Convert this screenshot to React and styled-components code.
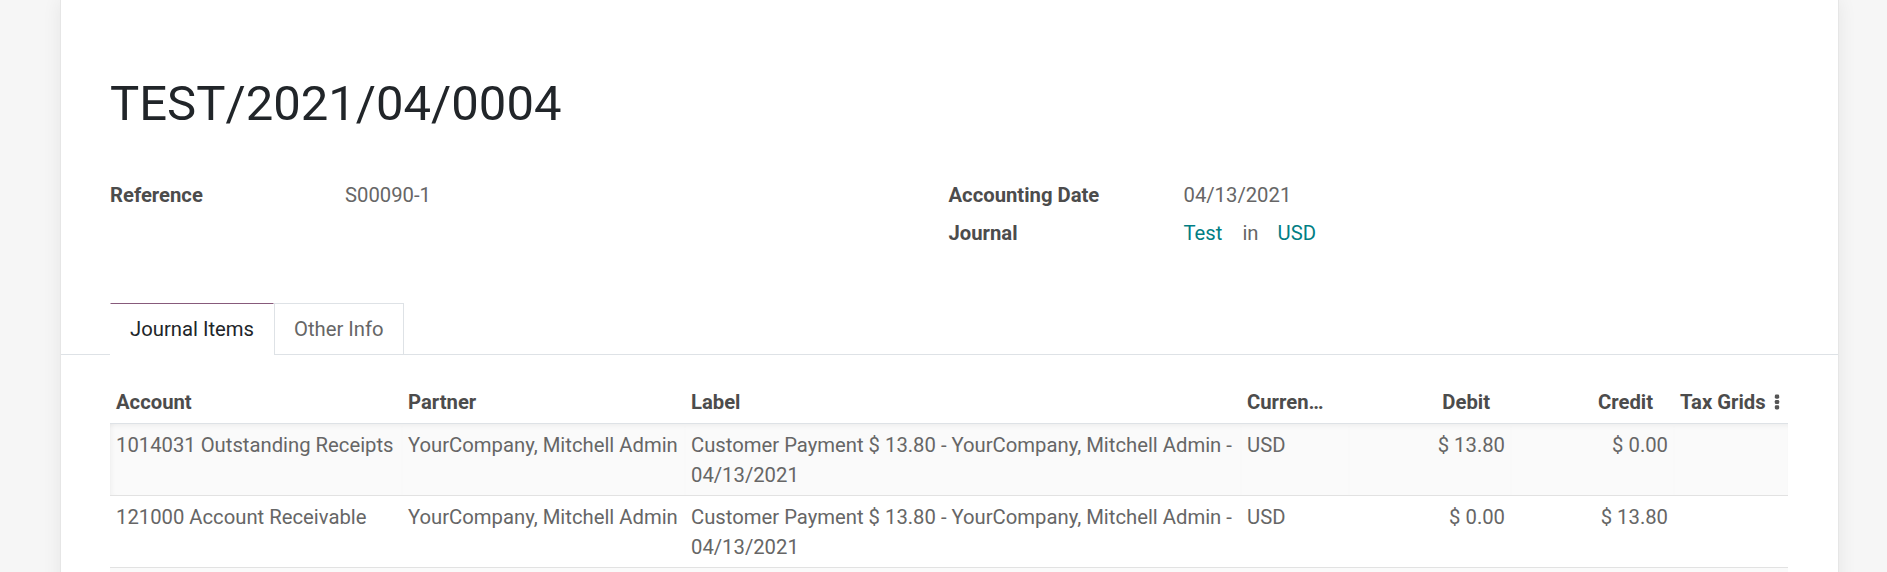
import React from "react";
import styled, { createGlobalStyle } from "styled-components";

const GlobalStyle = createGlobalStyle`
  html, body {
    margin: 0;
    padding: 0;
  }
  body {
    background: #f6f6f6;
    font-family: Roboto, "Noto Sans", sans-serif;
    font-size: 20.25px;
    line-height: 1.5;
    color: #666666;
  }
`;

const columns = [
  { key: "account", title: "Account", width: 292 },
  { key: "partner", title: "Partner", width: 283 },
  { key: "label", title: "Label", width: 556, wrap: true },
  { key: "currency", title: "Currency", width: 108 },
  { key: "debit", title: "Debit", width: 162, numeric: true },
  { key: "credit", title: "Credit", width: 163, numeric: true },
  { key: "tax", title: "Tax Grids", width: 114, toggler: true },
];

const lines = [
  {
    account: "1014031 Outstanding Receipts",
    partner: "YourCompany, Mitchell Admin",
    label: "Customer Payment $ 13.80 - YourCompany, Mitchell Admin - 04/13/2021",
    currency: "USD",
    debit: "$\u00a013.80",
    credit: "$\u00a00.00",
    tax: "",
  },
  {
    account: "121000 Account Receivable",
    partner: "YourCompany, Mitchell Admin",
    label: "Customer Payment $ 13.80 - YourCompany, Mitchell Admin - 04/13/2021",
    currency: "USD",
    debit: "$\u00a00.00",
    credit: "$\u00a013.80",
    tax: "",
  },
];

const DotsIcon = () => (
  <svg width="6" height="16" viewBox="0 0 6 16">
    <rect x="0.8" y="0.5" width="4.4" height="4.2" rx="1.4" fill="#555" />
    <rect x="0.8" y="5.9" width="4.4" height="4.2" rx="1.4" fill="#555" />
    <rect x="0.8" y="11.3" width="4.4" height="4.2" rx="1.4" fill="#555" />
  </svg>
);

const App = () => {
  return (
    <Page>
      <GlobalStyle />
      <Sheet>
        <Title>TEST/2021/04/0004</Title>

        <InfoGrid>
          <InfoGroup>
            <InfoRow>
              <FieldLabel>Reference</FieldLabel>
              <FieldValue>S00090-1</FieldValue>
            </InfoRow>
          </InfoGroup>
          <InfoGroup>
            <InfoRow>
              <FieldLabel>Accounting Date</FieldLabel>
              <FieldValue>04/13/2021</FieldValue>
            </InfoRow>
            <InfoRow>
              <FieldLabel>Journal</FieldLabel>
              <FieldValue>
                <LinkText>Test</LinkText>
                <InWord>in</InWord>
                <LinkText>USD</LinkText>
              </FieldValue>
            </InfoRow>
          </InfoGroup>
        </InfoGrid>

        <Tabs>
          <Tab $active>Journal Items</Tab>
          <Tab>Other Info</Tab>
        </Tabs>

        <Table>
          <colgroup>
            {columns.map((c) => (
              <col key={c.key} style={{ width: c.width }} />
            ))}
          </colgroup>
          <thead>
            <tr>
              {columns.map((c) => (
                <HeadCell key={c.key} $numeric={c.numeric} $toggler={c.toggler}>
                  {c.toggler ? (
                    <HeadInner>
                      <span>{c.title}</span>
                      <DotsIcon />
                    </HeadInner>
                  ) : (
                    c.title
                  )}
                </HeadCell>
              ))}
            </tr>
          </thead>
          <tbody>
            {lines.map((line, i) => (
              <Row key={i} $striped={i % 2 === 0} $first={i === 0}>
                {columns.map((c) => (
                  <Cell key={c.key} $numeric={c.numeric} $wrap={c.wrap}>
                    {line[c.key]}
                  </Cell>
                ))}
              </Row>
            ))}
            <Row $striped>
              {columns.map((c) => (
                <Cell key={c.key}>&nbsp;</Cell>
              ))}
            </Row>
          </tbody>
        </Table>
      </Sheet>
    </Page>
  );
};

export default App;

const Page = styled.div`
  min-height: 100vh;
  padding: 0 48px 0 60px;
  box-sizing: border-box;
`;

const Sheet = styled.div`
  min-height: 100vh;
  box-sizing: border-box;
  background: #ffffff;
  border-left: 1px solid #e6e6e6;
  border-right: 1px solid #e6e6e6;
  box-shadow: 0 0 18px rgba(0, 0, 0, 0.07);
  padding: 75px 51px 0 49px;
  overflow: hidden;
`;

const Title = styled.h1`
  margin: 0;
  font-size: 49px;
  font-weight: 400;
  line-height: 1.2;
  color: #212529;
`;

const InfoGrid = styled.div`
  display: grid;
  grid-template-columns: 1fr 1fr;
  margin-top: 42px;
`;

const InfoGroup = styled.div`
  display: flex;
  flex-direction: column;
`;

const InfoRow = styled.div`
  display: grid;
  grid-template-columns: 235px 1fr;
  line-height: 38px;
`;

const FieldLabel = styled.div`
  font-weight: 700;
  color: #4c4c4c;
`;

const FieldValue = styled.div`
  color: #666666;
`;

const LinkText = styled.span`
  color: #017e84;
`;

const InWord = styled.span`
  margin: 0 19px 0 20px;
  color: #666666;
`;

const Tabs = styled.div`
  display: flex;
  margin: 51px -51px 0 -50px;
  padding-left: 50px;
  border-bottom: 1px solid #dee2e6;
`;

const Tab = styled.div`
  margin-bottom: -1px;
  padding: 10px 19px;
  line-height: 30px;
  border: 1px solid;
  border-color: ${(p) =>
    p.$active ? "#875a7b #ffffff #ffffff #ffffff" : "#dee2e6"};
  background: #ffffff;
  color: ${(p) => (p.$active ? "#212529" : "#666666")};
`;

const Table = styled.table`
  width: 100%;
  margin-top: 25px;
  table-layout: fixed;
  border-collapse: collapse;
`;

const HeadCell = styled.th`
  padding: 7px ${(p) => (p.$toggler ? "8px" : "21px")} 6px 6px;
  text-align: ${(p) => (p.$numeric ? "right" : "left")};
  font-weight: 700;
  line-height: 30px;
  color: #4c4c4c;
  white-space: nowrap;
  overflow: hidden;
  text-overflow: ellipsis;
  border-bottom: 1px solid #dee2e6;
`;

const HeadInner = styled.div`
  display: flex;
  align-items: center;
  justify-content: space-between;
`;

const Row = styled.tr`
  background: ${(p) => (p.$striped ? "#fafafa" : "#ffffff")};
  td {
    box-shadow: ${(p) =>
      p.$first ? "inset 0 5px 5px -3px rgba(0, 0, 0, 0.05)" : "none"};
  }
  td:first-child {
    box-shadow: ${(p) =>
      p.$first
        ? "inset 0 5px 5px -3px rgba(0, 0, 0, 0.05), inset 5px 0 5px -3px rgba(0, 0, 0, 0.04)"
        : "none"};
  }
`;

const Cell = styled.td`
  padding: 6px 6px 5px;
  vertical-align: top;
  line-height: 30px;
  color: #666666;
  text-align: ${(p) => (p.$numeric ? "right" : "left")};
  white-space: ${(p) => (p.$wrap ? "normal" : "nowrap")};
  overflow: hidden;
  border-bottom: 1px solid #e2e2e2;
`;
